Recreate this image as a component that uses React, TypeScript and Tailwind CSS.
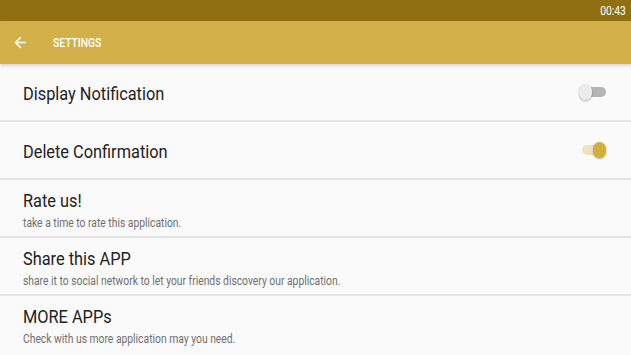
import { ArrowLeft } from "lucide-react";

function Toggle({ on }: { on: boolean }) {
  return (
    <div className="relative w-[30px] h-[16px] flex items-center">
      <div className={`w-[24px] h-[10px] rounded-full ml-[3px] ${on ? "bg-[#efe3bd]" : "bg-[#b5b5b5]"}`} />
      <div
        className={`absolute top-[0px] w-[13px] h-[16px] rounded-full shadow-[0_1px_2px_rgba(0,0,0,0.3)] ${
          on ? "left-[14px] bg-[#d4ae3c]" : "left-0 bg-[#ececec]"
        }`}
      />
    </div>
  );
}

function ToggleRow({ title, on }: { title: string; on: boolean }) {
  return (
    <div className="h-[58px] flex items-center justify-between pl-[23px] pr-[22px] border-b-2 border-[#e4e4e4]">
      <span className="mt-[4px] text-[19px] text-[#222] whitespace-nowrap origin-left scale-x-[0.86]">{title}</span>
      <Toggle on={on} />
    </div>
  );
}

function InfoRow({ title, sub, last }: { title: string; sub: string; last?: boolean }) {
  return (
    <div className={`h-[58px] flex flex-col pt-[9px] pl-[23px] ${last ? "" : "border-b-2 border-[#e4e4e4]"}`}>
      <span className="text-[19px] leading-[24px] text-[#222] whitespace-nowrap origin-left scale-x-[0.86]">{title}</span>
      <span className="mt-[2px] text-[12px] leading-[16px] text-[#6f6f6f] whitespace-nowrap origin-left scale-x-[0.86]">{sub}</span>
    </div>
  );
}

export default function App() {
  return (
    <div className="w-[631px] h-[355px] overflow-hidden bg-[#fafafa] font-['Roboto',sans-serif]">
      {/* status bar */}
      <div className="h-[21px] bg-[#8f6f10] flex items-center justify-end pr-[5px]">
        <span className="text-[12px] text-white origin-right scale-x-[0.86]">00:43</span>
      </div>
      {/* app bar */}
      <div className="h-[43px] bg-[#d4b04b] flex items-center shadow-[0_2px_3px_rgba(0,0,0,0.15)] relative">
        <ArrowLeft className="ml-[12px] w-[17px] h-[17px] text-white" strokeWidth={2.2} />
        <span className="ml-[24px] text-[12px] font-medium text-white origin-left scale-x-[0.86]">SETTINGS</span>
      </div>
      <ToggleRow title="Display Notification" on={false} />
      <ToggleRow title="Delete Confirmation" on={true} />
      <InfoRow title="Rate us!" sub="take a time to rate this application." />
      <InfoRow title="Share this APP" sub="share it to social network to let your friends discovery our application." />
      <InfoRow title="MORE APPs" sub="Check with us more application may you need." last />
    </div>
  );
}
